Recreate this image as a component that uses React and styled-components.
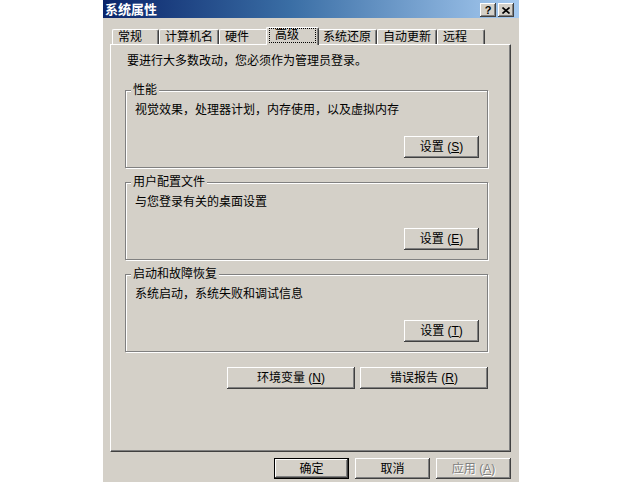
import React from 'react';
import styled, { createGlobalStyle, css } from 'styled-components';

const Global = createGlobalStyle`
  html, body { margin: 0; padding: 0; background: #fff; }
  body {
    font-family: "Liberation Sans", "Noto Sans CJK SC", sans-serif;
    font-size: 12px;
    color: #000;
  }
`;

const FONT = `"Liberation Sans", "Noto Sans CJK SC", sans-serif`;

const Page = styled.div`
  width: 620px;
  height: 482px;
  overflow: hidden;
  display: flex;
  padding-left: 103px;
  box-sizing: border-box;
`;

const Window = styled.div`
  width: 416px;
  height: 482px;
  flex: none;
  background: #d4d0c8;
  display: flex;
  flex-direction: column;
`;

const TitleBar = styled.div`
  height: 18px;
  flex: none;
  display: flex;
  align-items: center;
  justify-content: space-between;
  background: linear-gradient(to right, #0a246a 0%, #3a6ea5 45%, #a6caf0 100%);
  padding: 0 5px 0 2px;
`;

const Title = styled.span`
  color: #fff;
  font-weight: bold;
  font-size: 13px;
  line-height: 18px;
  font-family: "Noto Sans CJK SC", sans-serif;
`;

const Controls = styled.div`
  display: flex;
  gap: 2px;
  margin-top: 2px;
`;

const CtrlButton = styled.div`
  width: 16px;
  height: 14px;
  box-sizing: border-box;
  background: #d4d0c8;
  display: flex;
  align-items: center;
  justify-content: center;
  box-shadow: inset -1px -1px #404040, inset 1px 1px #fff, inset -2px -2px #808080, inset 2px 2px #d4d0c8;
  font: bold 11px ${FONT};
  line-height: 12px;
  color: #000;
`;

const Content = styled.div`
  padding: 9px 8px 0 7px;
  display: flex;
  flex-direction: column;
`;

const TabStrip = styled.div`
  display: flex;
  align-items: flex-end;
  height: 17px;
  padding-left: 2px;
  position: relative;
  z-index: 1;
`;

const Tab = styled.div`
  box-sizing: border-box;
  flex: none;
  width: ${p => p.$w}px;
  height: 15px;
  border-top: 1px solid #fff;
  border-left: 1px solid #fff;
  border-right: 1px solid #404040;
  border-radius: 2px 2px 0 0;
  box-shadow: inset -1px 0 #808080;
  background: #d4d0c8;
  padding-left: 5px;
  line-height: 14px;
  font-size: 12px;
  white-space: nowrap;
  ${p => p.$active && css`
    width: ${p.$w + 4}px;
    height: 18px;
    margin: 0 -2px -1px;
    position: relative;
    z-index: 2;
    padding-left: 2px;
  `}
`;

const FocusLabel = styled.span`
  display: block;
  box-sizing: border-box;
  height: 15px;
  width: 47px;
  border: 1px dotted #000;
  padding-left: 5px;
  line-height: 13px;
`;

const Panel = styled.div`
  height: 408px;
  box-sizing: border-box;
  border-top: 1px solid #fff;
  border-left: 1px solid #fff;
  border-right: 1px solid #404040;
  border-bottom: 1px solid #404040;
  box-shadow: inset -1px -1px #808080;
  padding: 9px 0 0 14px;
  display: flex;
  flex-direction: column;
`;

const Intro = styled.div`
  margin: 0 0 22px 2px;
  line-height: 14px;
`;

const Group = styled.div`
  position: relative;
  width: 363px;
  height: 78px;
  box-sizing: border-box;
  border: 1px solid #808080;
  box-shadow: inset 1px 1px #fff, 1px 1px #fff;
  padding: 12px 8px 9px 9px;
  margin-bottom: 14px;
  display: flex;
  flex-direction: column;
`;

const Legend = styled.span`
  position: absolute;
  top: -8px;
  left: 5px;
  padding: 0 2px;
  background: #d4d0c8;
  line-height: 14px;
`;

const Desc = styled.div`
  line-height: 14px;
  flex: 1;
`;

const Button = styled.button`
  width: ${p => p.$w || 75}px;
  height: ${p => p.$h || 22}px;
  flex: none;
  box-sizing: border-box;
  border: none;
  margin: 0;
  padding: 0;
  background: #d4d0c8;
  font: 12px ${FONT};
  line-height: 14px;
  color: #000;
  align-self: flex-end;
  box-shadow: inset -1px -1px #404040, inset 1px 1px #fff, inset -2px -2px #808080, inset 2px 2px #d4d0c8;
  ${p => p.$default && css`
    box-shadow: inset 0 0 0 1px #000, inset -2px -2px #404040, inset 2px 2px #fff, inset -3px -3px #808080;
  `}
  ${p => p.$disabled && css`
    color: #808080;
    text-shadow: 1px 1px #fff;
  `}
`;

const Key = styled.u`
  text-decoration: underline;
`;

const EnvRow = styled.div`
  width: 363px;
  display: flex;
  justify-content: flex-end;
  gap: 5px;
  margin-top: 1px;
`;

const Footer = styled.div`
  display: flex;
  justify-content: flex-end;
  gap: 6px;
  margin-top: 6px;
`;

const tabs = [
  { label: '常规', w: 47 },
  { label: '计算机名', w: 60 },
  { label: '硬件', w: 49 },
  { label: '高级', w: 49, active: true },
  { label: '系统还原', w: 60 },
  { label: '自动更新', w: 60 },
  { label: '远程', w: 48 },
];

const groups = [
  { title: '性能', desc: '视觉效果，处理器计划，内存使用，以及虚拟内存', key: 'S' },
  { title: '用户配置文件', desc: '与您登录有关的桌面设置', key: 'E' },
  { title: '启动和故障恢复', desc: '系统启动，系统失败和调试信息', key: 'T' },
];

const Accel = ({ text, k }) => (
  <>
    {text} (<Key>{k}</Key>)
  </>
);

export default function App() {
  return (
    <Page>
      <Global />
      <Window>
        <TitleBar>
          <Title>系统属性</Title>
          <Controls>
            <CtrlButton>?</CtrlButton>
            <CtrlButton>
              <svg width="8" height="7" viewBox="0 0 8 7">
                <path d="M0.5 0.5 L7.5 6.5 M7.5 0.5 L0.5 6.5" stroke="#000" strokeWidth="1.6" fill="none" />
              </svg>
            </CtrlButton>
          </Controls>
        </TitleBar>
        <Content>
          <TabStrip>
            {tabs.map(t => (
              <Tab key={t.label} $w={t.w} $active={t.active}>
                {t.active ? <FocusLabel>{t.label}</FocusLabel> : t.label}
              </Tab>
            ))}
          </TabStrip>
          <Panel>
            <Intro>要进行大多数改动，您必须作为管理员登录。</Intro>
            {groups.map(g => (
              <Group key={g.title}>
                <Legend>{g.title}</Legend>
                <Desc>{g.desc}</Desc>
                <Button><Accel text="设置" k={g.key} /></Button>
              </Group>
            ))}
            <EnvRow>
              <Button $w={128}><Accel text="环境变量" k="N" /></Button>
              <Button $w={128}><Accel text="错误报告" k="R" /></Button>
            </EnvRow>
          </Panel>
          <Footer>
            <Button $h={21} $default>确定</Button>
            <Button $h={21}>取消</Button>
            <Button $h={21} $disabled><Accel text="应用" k="A" /></Button>
          </Footer>
        </Content>
      </Window>
    </Page>
  );
}
